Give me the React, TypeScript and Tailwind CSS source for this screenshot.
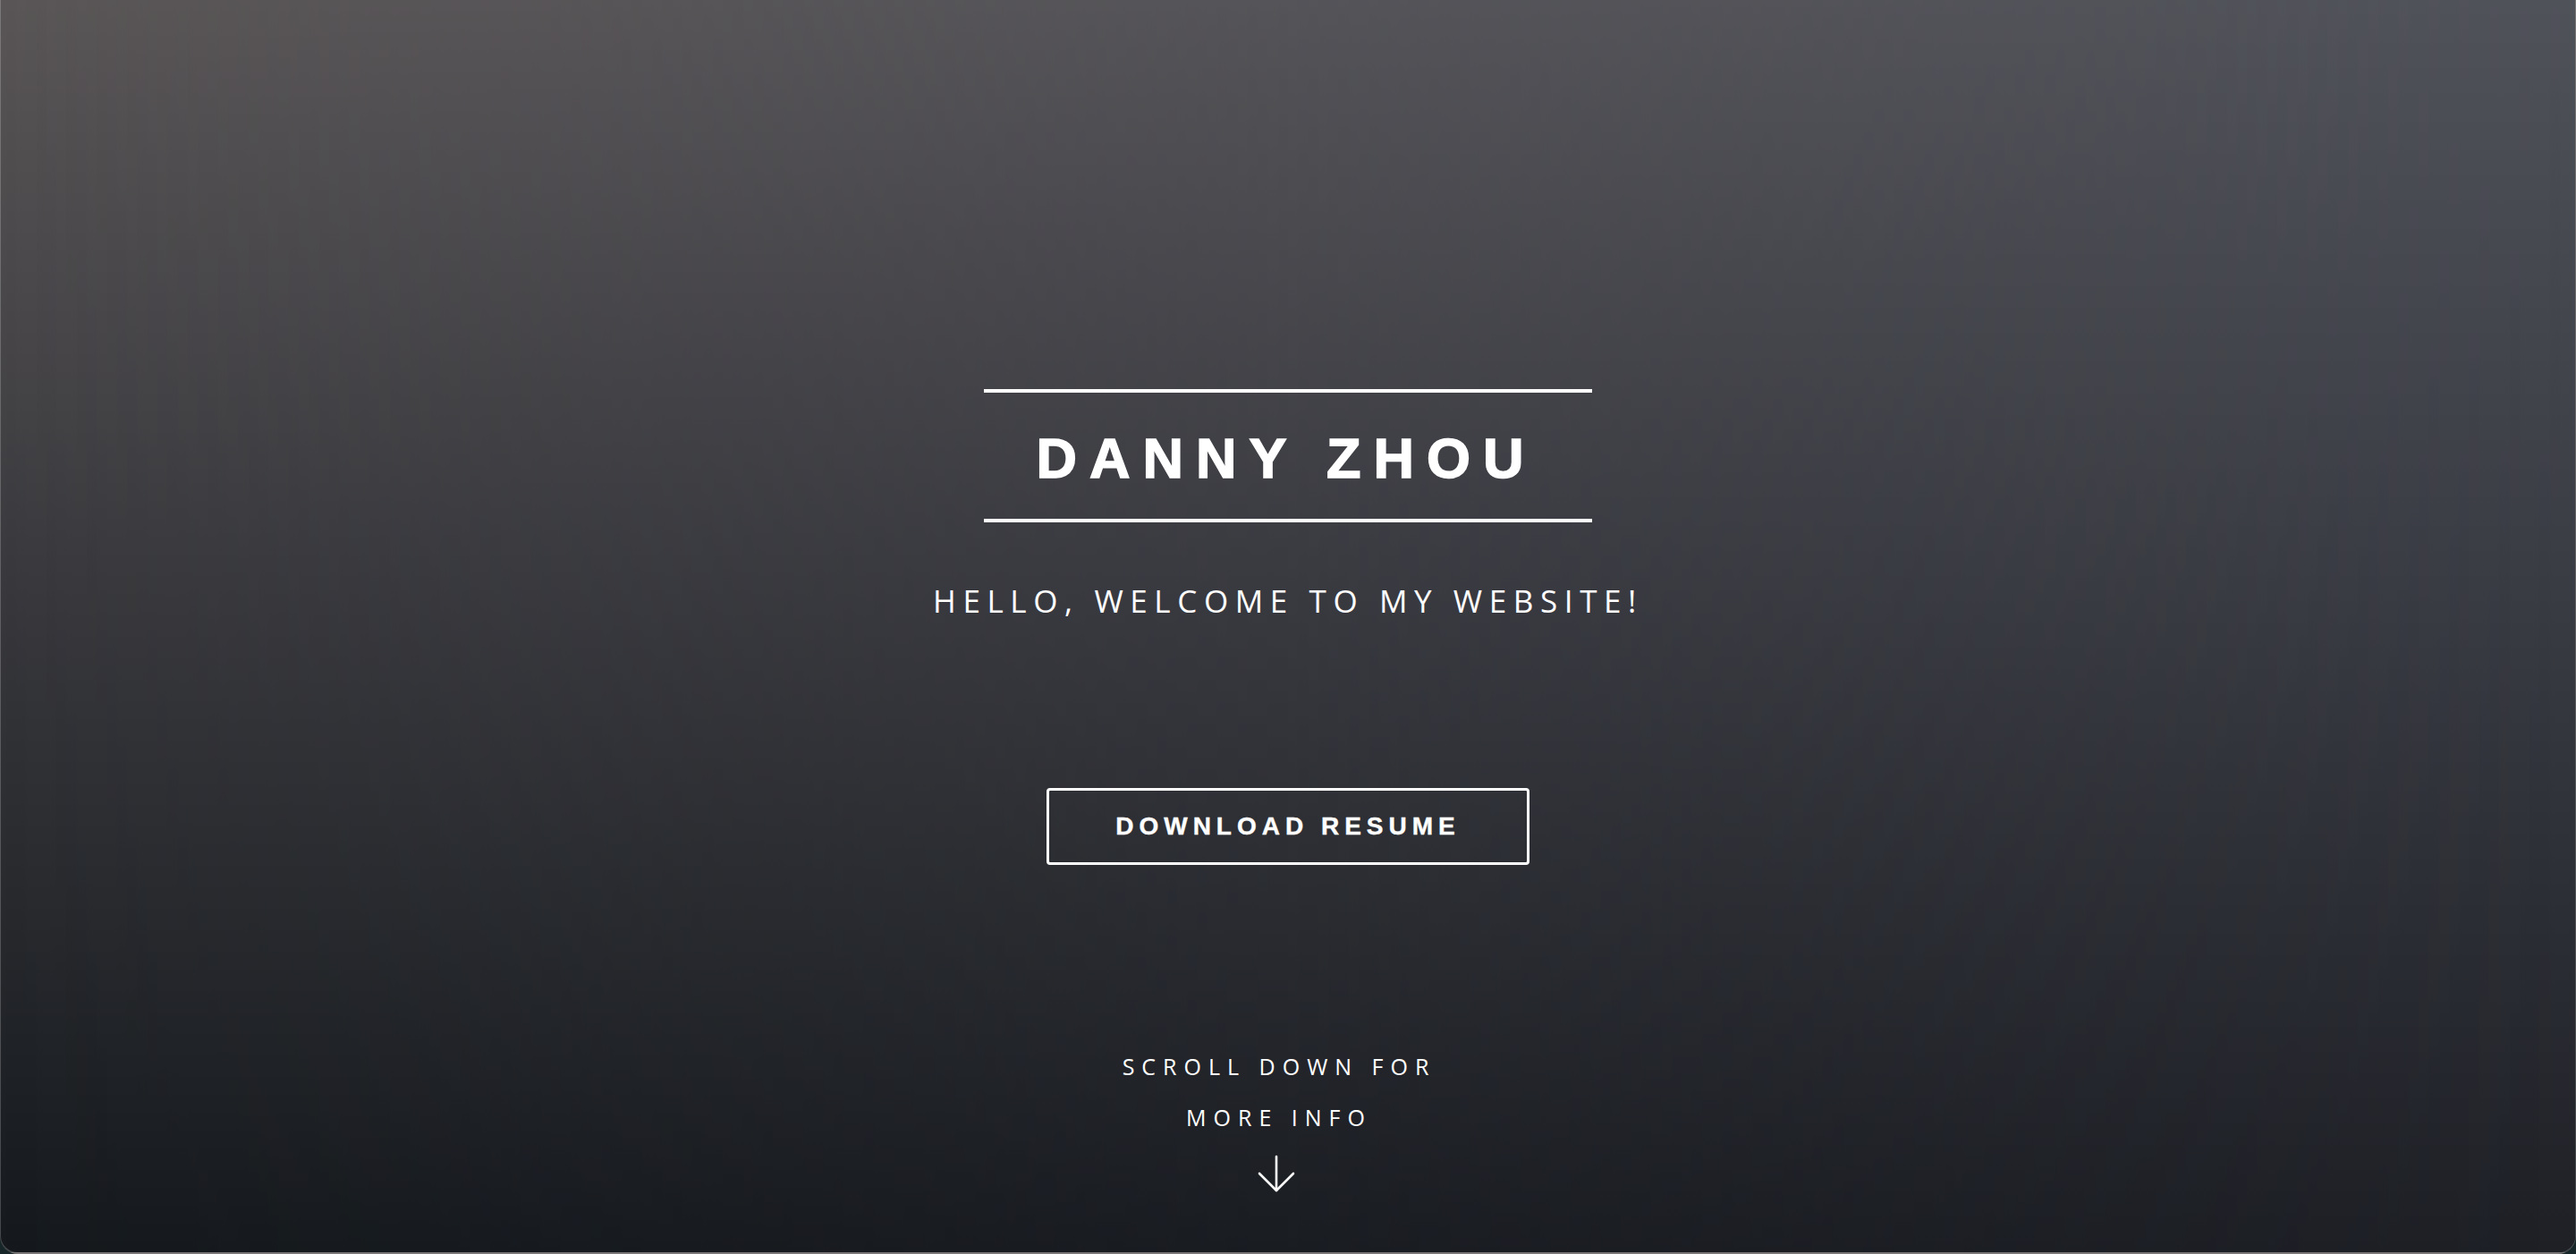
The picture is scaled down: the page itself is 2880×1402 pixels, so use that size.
import React from 'react';

function ArrowDownIcon() {
    return (
        <svg width="44" height="44" viewBox="0 0 44 44" fill="none" stroke="white" strokeWidth="2.6" strokeLinecap="round" strokeLinejoin="round">
            <path d="M22 2v38" />
            <path d="M3 21l19 19 19-19" />
        </svg>
    );
}

function Hero() {
    return (
        <div className="relative flex flex-col items-center pt-[435px]">
            <div className="h-[4px] w-[680px] bg-white" />
            <h1 className="mt-[42px] mr-[4px] text-[63px] leading-none font-bold tracking-[14px] text-white [-webkit-text-stroke:1.5px_white] [font-family:'Liberation_Sans',Arial,sans-serif]">
                DANNY ZHOU
            </h1>
            <div className="mt-[36px] h-[4px] w-[680px] bg-white" />

            <p className="mt-[70px] text-[35px] leading-none font-normal tracking-[7.6px] text-white [font-family:'Open_Sans',sans-serif]">
                HELLO, WELCOME TO MY WEBSITE!
            </p>

            <button className="mt-[192px] flex h-[86px] w-[540px] items-center justify-center rounded-[4px] border-[3px] border-white text-[28px] font-bold tracking-[6px] text-white [-webkit-text-stroke:0.4px_white] [font-family:'Liberation_Sans',Arial,sans-serif]">
                DOWNLOAD RESUME
            </button>

            <div className="mt-[197px] mr-[24px] flex flex-col items-center text-white [font-family:'Open_Sans',sans-serif]">
                <p className="max-w-[400px] pl-[4px] text-center text-[25px] leading-[57px] tracking-[8px]">
                    SCROLL DOWN FOR MORE INFO
                </p>
                <div className="mt-[13px] mr-[2px]">
                    <ArrowDownIcon />
                </div>
            </div>
        </div>
    );
}

export default function App() {
    return (
        <div className="h-[1402px] w-full bg-[#172629]">
            <div className="relative h-full w-full overflow-hidden rounded-b-[20px] border-x border-b-2 border-white/20 bg-[linear-gradient(to_bottom,#5a5657_0%,#3a3a3e_45%,#15191d_100%)]">
                <div className="absolute inset-0 bg-[linear-gradient(to_bottom,#50525a_0%,#3b3d45_45%,#1e2026_100%)] [mask-image:linear-gradient(to_right,transparent,black)]" />
                <Hero />
            </div>
        </div>
    );
}
